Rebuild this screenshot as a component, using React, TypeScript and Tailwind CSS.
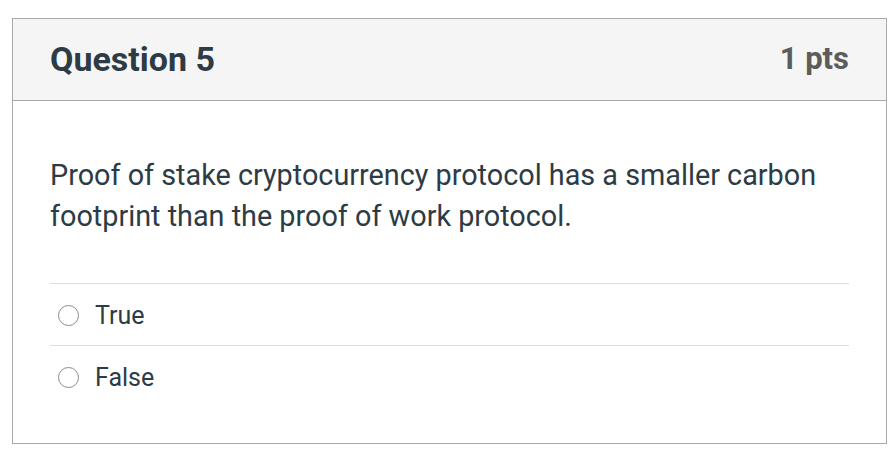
import React from 'react';

const answers = ['True', 'False'];

function Radio() {
    return (
        <span className="w-[21px] h-[21px] rounded-full border-[1.5px] border-[#8a8a8a] bg-white shrink-0" />
    );
}

export default function App() {
    return (
        <div className="w-[890px] h-[464px] bg-white pt-[18px] pl-[12px] font-['Roboto',sans-serif] text-[#2d3b45]">
            <div className="w-[875px] h-[426px] border border-[#a9a9a9] flex flex-col">
                <div className="h-[82px] bg-[#f5f5f5] border-b border-[#a9a9a9] flex items-center justify-between px-[37px]">
                    <h2 className="text-[34px] font-bold">Question 5</h2>
                    <span className="text-[31px] font-bold text-[#5c5c5c]">1 pts</span>
                </div>
                <div className="px-[37px] pt-[54px]">
                    <p className="text-[28.8px] leading-[41px]">
                        Proof of stake cryptocurrency protocol has a smaller carbon footprint than the proof of work protocol.
                    </p>
                    <div className="mt-[46px]">
                        {answers.map(a => (
                            <div key={a} className="h-[62px] border-t border-[#dcdcdc] flex items-center gap-[16px] pl-[8px] pt-[2px]">
                                <Radio />
                                <span className="text-[25px]">{a}</span>
                            </div>
                        ))}
                    </div>
                </div>
            </div>
        </div>
    );
}
